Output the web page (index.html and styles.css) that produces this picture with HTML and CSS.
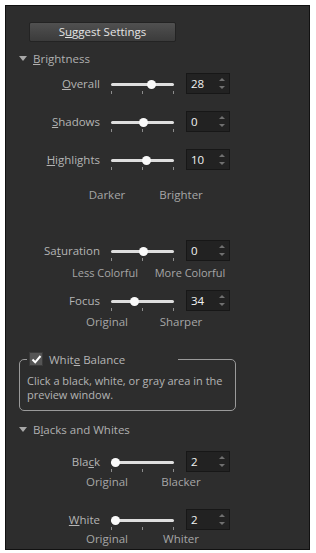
FILE: index.html
```html
<!DOCTYPE html>
<html lang="en">
<head>
  <meta charset="UTF-8">
  <title>Adjust Settings</title>
  <link rel="stylesheet" href="styles.css">
</head>
<body>
  <div class="panel">
    <button class="suggest">S<u>u</u>ggest Settings</button>

    <div class="head head-bright"><span class="tri"></span><span><u>B</u>rightness</span></div>

    <div class="row row-first">
      <span class="lbl"><u>O</u>verall</span>
      <div class="slider"><span class="track"></span><span class="ticks"><i></i><i></i><i></i></span><span class="thumb" style="--v:0.64"></span></div>
      <div class="spin"><span class="val">28</span><span class="arrows"><b class="up"></b><b class="down"></b></span></div>
    </div>
    <div class="row">
      <span class="lbl"><u>S</u>hadows</span>
      <div class="slider"><span class="track"></span><span class="ticks"><i></i><i></i><i></i></span><span class="thumb" style="--v:0.5"></span></div>
      <div class="spin"><span class="val">0</span><span class="arrows"><b class="up"></b><b class="down"></b></span></div>
    </div>
    <div class="row">
      <span class="lbl"><u>H</u>ighlights</span>
      <div class="slider"><span class="track"></span><span class="ticks"><i></i><i></i><i></i></span><span class="thumb" style="--v:0.55"></span></div>
      <div class="spin"><span class="val">10</span><span class="arrows"><b class="up"></b><b class="down"></b></span></div>
    </div>
    <div class="caps caps-bright"><span>Darker</span><span>Brighter</span></div>

    <div class="row row-sat">
      <span class="lbl">Sa<u>t</u>uration</span>
      <div class="slider"><span class="track"></span><span class="ticks"><i></i><i></i><i></i></span><span class="thumb" style="--v:0.5"></span></div>
      <div class="spin"><span class="val">0</span><span class="arrows"><b class="up"></b><b class="down"></b></span></div>
    </div>
    <div class="caps caps-tight"><span>Less Colorful</span><span>More Colorful</span></div>

    <div class="row row-focus">
      <span class="lbl">Focus</span>
      <div class="slider"><span class="track"></span><span class="ticks"><i></i><i></i><i></i></span><span class="thumb" style="--v:0.34"></span></div>
      <div class="spin"><span class="val">34</span><span class="arrows"><b class="up"></b><b class="down"></b></span></div>
    </div>
    <div class="caps caps-focus"><span>Original</span><span>Sharper</span></div>

    <fieldset class="wb">
      <legend><span class="check"><svg width="11" height="11" viewBox="0 0 11 11"><path d="M1.5 5.5 L4.2 8.3 L9.5 2" fill="none" stroke="#fff" stroke-width="2"/></svg></span><span>Whit<u>e</u> Balance</span></legend>
      <p>Click a black, white, or gray area in the preview window.</p>
    </fieldset>

    <div class="head head-bw"><span class="tri"></span><span>B<u>l</u>acks and Whites</span></div>

    <div class="row row-black">
      <span class="lbl">Bla<u>c</u>k</span>
      <div class="slider"><span class="track"></span><span class="ticks"><i></i><i></i><i></i></span><span class="thumb" style="--v:0.02"></span></div>
      <div class="spin"><span class="val">2</span><span class="arrows"><b class="up"></b><b class="down"></b></span></div>
    </div>
    <div class="caps caps-bw"><span>Original</span><span>Blacker</span></div>

    <div class="row row-white">
      <span class="lbl"><u>W</u>hite</span>
      <div class="slider"><span class="track"></span><span class="ticks"><i></i><i></i><i></i></span><span class="thumb" style="--v:0.02"></span></div>
      <div class="spin"><span class="val">2</span><span class="arrows"><b class="up"></b><b class="down"></b></span></div>
    </div>
    <div class="caps caps-last"><span>Original</span><span>Whiter</span></div>
  </div>
</body>
</html>
```

FILE: styles.css
```css
body {
  margin: 0;
  background: #fff;
  font-family: "Open Sans", "Noto Sans", sans-serif;
  font-size: 11px;
}
.panel {
  margin: 5px 0 0 5px;
  width: 303px;
  height: 543px;
  border: 1px solid #111;
  background: #2d2d2d;
  color: #b4b4b4;
  display: flex;
  flex-direction: column;
  align-items: flex-start;
  overflow: hidden;
}
u {
  text-decoration: underline;
  text-underline-offset: 1px;
}
.suggest {
  margin: 16px 0 0 23px;
  width: 147px;
  height: 20px;
  padding: 0;
  border: 1px solid #232323;
  border-radius: 2px;
  background: linear-gradient(#505050, #3b3b3b);
  color: #e4e4e4;
  font-family: inherit;
  font-size: 11.5px;
  line-height: 18px;
}
.head {
  display: flex;
  align-items: center;
  height: 16px;
  margin-left: 13px;
  gap: 6px;
  color: #b0b0b0;
  font-size: 11.5px;
}
.head-bright { margin-top: 8px; }
.head-bw { margin-top: 10px; }
.tri {
  width: 0;
  height: 0;
  border-left: 4px solid transparent;
  border-right: 4px solid transparent;
  border-top: 5px solid #a8a8a8;
  margin-top: 1px;
}
.row {
  display: grid;
  grid-template-columns: 96px 63px 44px;
  column-gap: 9px;
  align-items: center;
  height: 21px;
  margin-top: 17px;
}
.row .spin { margin-left: 3px; }
.row-first { margin-top: 7px; }
.row-sat { margin-top: 37px; }
.row-focus { margin-top: 9px; }
.row-black { margin-top: 14px; }
.row-white { margin-top: 19px; }
.lbl {
  text-align: right;
  padding-right: 2px;
  font-size: 11.5px;
}
.slider {
  position: relative;
  height: 21px;
}
.track {
  position: absolute;
  left: 0;
  right: 0;
  top: 10px;
  height: 3px;
  border-radius: 2px;
  background: #dedede;
}
.ticks {
  position: absolute;
  left: 0;
  right: 0;
  top: 18px;
  height: 3px;
  display: flex;
  justify-content: space-between;
}
.ticks i {
  width: 1px;
  background: #8c8c8c;
}
.thumb {
  position: absolute;
  top: 7px;
  left: calc(var(--v) * 58px - 1px);
  width: 9px;
  height: 9px;
  border-radius: 50%;
  background: #fafafa;
}
.spin {
  box-sizing: border-box;
  width: 44px;
  height: 21px;
  border: 1px solid #171717;
  background: #222;
  display: flex;
  align-items: center;
  justify-content: space-between;
  padding: 0 4px 0 4px;
}
.val {
  color: #f2f2f2;
  font-size: 11.5px;
}
.arrows {
  display: flex;
  flex-direction: column;
  gap: 5px;
}
.arrows b {
  width: 0;
  height: 0;
  border-left: 3px solid transparent;
  border-right: 3px solid transparent;
}
.arrows .up { border-bottom: 3px solid #707070; }
.arrows .down { border-top: 3px solid #707070; }
.caps {
  display: grid;
  grid-template-columns: 74px 74px;
  margin-left: 64px;
  height: 16px;
  line-height: 16px;
  text-align: center;
  color: #a6a6a6;
  font-size: 11.5px;
}
.caps-bright { margin-top: 17px; }
.caps-tight {
  margin-top: 4px;
  margin-left: 57px;
  grid-template-columns: 84px 84px;
  column-gap: 1px;
  font-size: 11px;
}
.caps-focus { margin-top: 3px; }
.caps-bw { margin-top: 2px; }
.caps-last { margin-top: 1px; }
.wb {
  margin: 21px 0 0 13px;
  width: 217px;
  box-sizing: border-box;
  padding: 7px 5px 8px 7px;
  border: 1px solid #9a9a9a;
  border-radius: 5px;
}
.wb legend {
  display: flex;
  align-items: center;
  width: 151px;
  height: 16px;
  padding: 0 0 0 2px;
  box-sizing: border-box;
  color: #b4b4b4;
  font-size: 11.5px;
}
.check {
  box-sizing: border-box;
  width: 14px;
  height: 14px;
  margin-right: 6px;
  background: #555;
  border: 1px solid #3a3a3a;
  display: flex;
  align-items: center;
  justify-content: center;
}
.wb p {
  margin: 0;
  line-height: 14px;
  font-size: 11px;
  color: #b4b4b4;
}
```
